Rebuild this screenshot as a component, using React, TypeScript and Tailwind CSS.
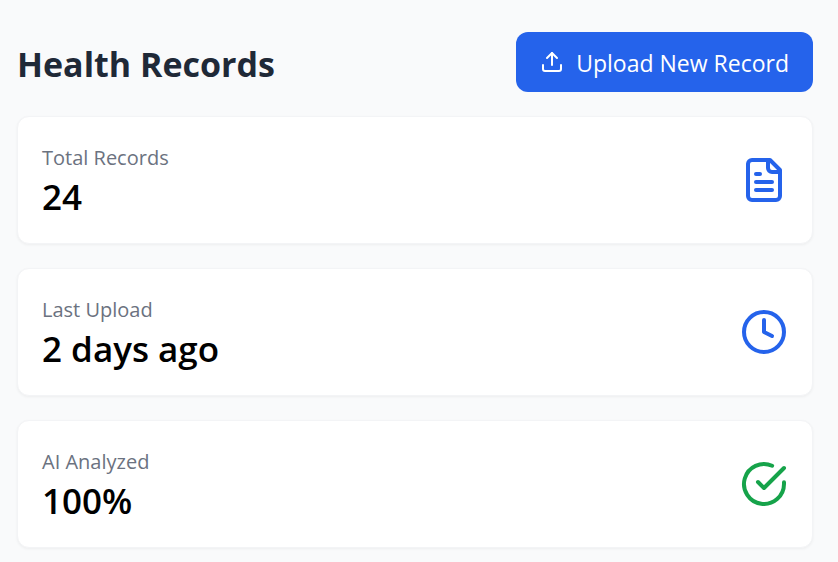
import { Clock, Upload } from "lucide-react";
import type { ReactNode } from "react";

type Stat = { label: string; value: string; icon: ReactNode };

function Glyph({ className, children }: { className: string; children: ReactNode }) {
  return (
    <svg
      className={`size-12 ${className}`}
      viewBox="0 0 24 24"
      fill="none"
      stroke="currentColor"
      strokeWidth="2"
      strokeLinecap="round"
      strokeLinejoin="round"
      aria-hidden="true"
    >
      {children}
    </svg>
  );
}

const stats: Stat[] = [
  {
    label: "Total Records",
    value: "24",
    icon: (
      <Glyph className="text-[#2563eb]">
        <path d="M15 2H6a2 2 0 0 0-2 2v16a2 2 0 0 0 2 2h12a2 2 0 0 0 2-2V7Z" />
        <path d="M14 2v4a2 2 0 0 0 2 2h4" />
        <path d="M10 9H8" />
        <path d="M16 13H8" />
        <path d="M16 17H8" />
      </Glyph>
    ),
  },
  {
    label: "Last Upload",
    value: "2 days ago",
    icon: <Clock className="size-12 text-[#2563eb]" aria-hidden="true" />,
  },
  {
    label: "AI Analyzed",
    value: "100%",
    icon: (
      <Glyph className="text-[#16a34a]">
        <path d="M22 11.08V12a10 10 0 1 1-5.93-9.14" />
        <path d="m9 11 3 3L22 4" />
      </Glyph>
    ),
  },
];

function StatCard({ label, value, icon }: Stat) {
  return (
    <section className="flex items-center justify-between rounded-xl border border-[#f3f4f6] bg-white p-6 shadow-[0_1px_3px_rgba(0,0,0,0.05)]">
      <div>
        <p className="text-[20px] leading-[34px] text-[#6b7280]">{label}</p>
        <p className="text-[35px] font-semibold leading-[44px] text-black">{value}</p>
      </div>
      {icon}
    </section>
  );
}

export default function App() {
  return (
    <main className="min-h-screen bg-[#f9fafb] pb-4 pl-[17px] pr-[25px] pt-8 font-['Open_Sans','Noto_Sans',sans-serif]">
      <header className="mb-6 flex items-center justify-between">
        <h1 className="pt-1 text-[34px] font-bold leading-[56px] text-[#1f2937]">Health Records</h1>
        <button type="button" className="flex h-[60px] items-center gap-3 rounded-xl bg-[#2563eb] px-6 text-[23px] text-white">
          <Upload className="size-6" aria-hidden="true" />
          <span className="pt-0.5">Upload New Record</span>
        </button>
      </header>
      <div className="grid gap-6">
        {stats.map((stat) => (
          <StatCard key={stat.label} {...stat} />
        ))}
      </div>
    </main>
  );
}
